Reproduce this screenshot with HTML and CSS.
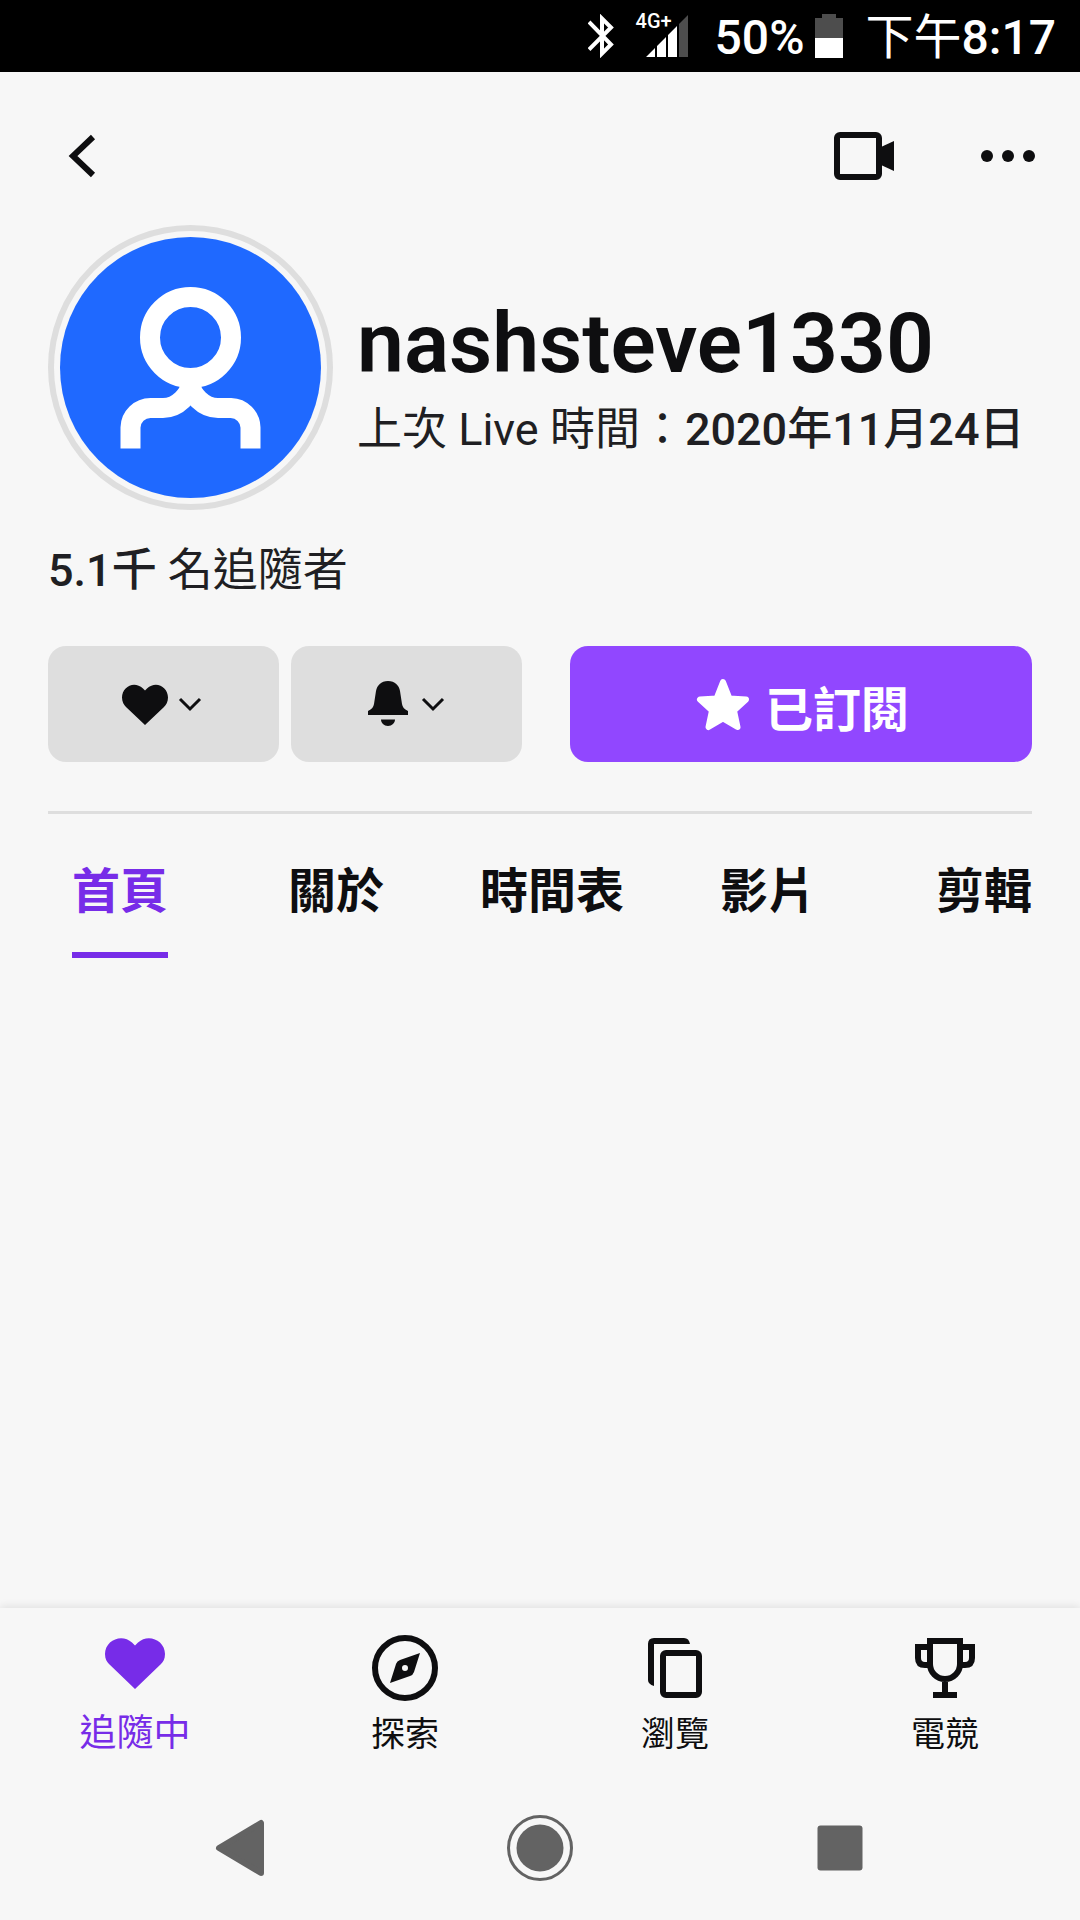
FILE: index.html
```html
<!DOCTYPE html>
<html lang="zh-Hant">
<head>
<meta charset="utf-8">
<meta name="viewport" content="width=device-width, initial-scale=1">
<title>nashsteve1330</title>
<link rel="stylesheet" href="styles.css">
</head>
<body>
<div class="screen">
  <div class="status">
    <svg class="status-bluetooth" width="26" height="44" viewBox="0 0 26 44" aria-hidden="true"><path d="M1 8 23 30.500 14 39.500V4.500L23 13.500 1 35.500" fill="none" stroke="#fff" stroke-width="4"/></svg>
    <div class="signal">
      <span class="signal-type">4G+</span>
      <svg width="42" height="42" viewBox="0 0 42 42" aria-hidden="true"><path d="M0 42 9 33V42ZM11 42V31L20 22V42ZM22 42V20L31 11V42Z" fill="#fff"/><path d="M33 42V9L42 0V42Z" fill="#4d4d4d"/></svg>
    </div>
    <div class="battery">
      <span class="status-text">50%</span>
      <svg width="28" height="44" viewBox="0 0 28 44" aria-hidden="true"><path d="M0 4H7V0H21V4H28V24H0Z" fill="#4d4d4d"/><path d="M0 24H28V44H0Z" fill="#fff"/></svg>
    </div>
    <time class="status-text"><span class="day-part">下午</span>8:17</time>
  </div>

  <header class="topbar">
    <button class="icon-button" aria-label="返回"><svg width="72" height="72" viewBox="0 0 72 72"><path d="M45 17 25 36 45 55" fill="none" stroke="currentColor" stroke-width="6"/></svg></button>
    <div class="topbar-actions">
      <button class="icon-button" aria-label="直播"><svg width="72" height="72" viewBox="0 0 72 72"><rect x="9" y="15" width="42" height="42" rx="3" fill="none" stroke="currentColor" stroke-width="6"/><path d="M53 27 66 21V51L53 45Z" fill="currentColor"/></svg></button>
      <button class="icon-button" aria-label="更多"><svg width="72" height="72" viewBox="0 0 72 72" fill="currentColor"><circle cx="15" cy="36" r="6"/><circle cx="36" cy="36" r="6"/><circle cx="57" cy="36" r="6"/></svg></button>
    </div>
  </header>

  <main class="channel">
    <section class="profile">
      <div class="avatar">
        <svg viewBox="0 0 261 261" aria-hidden="true"><circle cx="130.500" cy="130.500" r="130.500" fill="#1f69ff"/><g fill="none" stroke="#fff" stroke-width="20"><circle cx="130.500" cy="100.500" r="40.500"/><path d="M70.500 211.500V190.500A20 20 0 0 1 90.500 171H103C118 171 130.500 157 130.500 146C130.500 157 143 171 158 171H171A20 20 0 0 1 190.500 190.500V211.500"/></g></svg>
      </div>
      <div class="profile-text">
        <h1 class="name">nashsteve1330</h1>
        <p class="last-live">上次 Live 時間：<strong>2020年11月24日</strong></p>
      </div>
    </section>
    <p class="followers"><strong>5.1千</strong> 名追隨者</p>

    <div class="actions">
      <button class="action" aria-label="追隨">
        <svg width="48" height="48" viewBox="0 0 48 48"><path d="M24 10.500 22 8.500C13 0 1 7 1 17.500C1 22 3 25 5 27L24 45 43 27C45 25 47 22 47 17.500C47 7 35 0 26 8.500Z" fill="currentColor"/></svg>
        <svg width="32" height="32" viewBox="0 0 32 32"><path d="M6 11 16 21 26 11" fill="none" stroke="currentColor" stroke-width="3"/></svg>
      </button>
      <button class="action" aria-label="通知">
        <svg width="48" height="48" viewBox="0 0 48 48" fill="currentColor"><path d="M24 1C17 1 13 5.500 12 11L10 24C9.500 27 8 29 4 31V35H44V31C40 29 38.500 27 38 24L36 11C35 5.500 31 1 24 1ZM17 39.500H31C31 43 28 46 24 46S17 43 17 39.500Z"/></svg>
        <svg width="32" height="32" viewBox="0 0 32 32"><path d="M6 11 16 21 26 11" fill="none" stroke="currentColor" stroke-width="3"/></svg>
      </button>
      <button class="action action-subscribe">
        <svg width="60" height="60" viewBox="0 0 60 60" aria-hidden="true"><path d="M30 8 36.500 24.500 53 25.500 41 36.500 44.500 53 30 44.500 15.500 53 19 36.500 7 25.500 23.500 24.500Z" fill="#fff" stroke="#fff" stroke-width="6" stroke-linejoin="round"/></svg>
        <span class="action-label">已訂閱</span>
      </button>
    </div>

    <nav class="tabs" aria-label="頻道">
      <div class="tab-row">
        <a class="tab tab-current" href="#home" aria-current="page">首頁</a>
        <a class="tab" href="#about">關於</a>
        <a class="tab" href="#schedule">時間表</a>
        <a class="tab" href="#videos">影片</a>
        <a class="tab" href="#clips">剪輯</a>
      </div>
    </nav>
  </main>

  <nav class="bottom" aria-label="主選單">
    <a class="bottom-item bottom-current" href="#following" aria-current="page">
      <svg width="72" height="72" viewBox="0 0 72 72"><path d="M36 13.500 33 10.500C23 1 6 8 6 22C6 27 8 30 10 32L36 57 62 32C64 30 66 27 66 22C66 8 49 1 39 10.500Z" fill="currentColor"/></svg>
      <span>追隨中</span>
    </a>
    <a class="bottom-item" href="#discover">
      <svg width="72" height="72" viewBox="0 0 72 72"><circle cx="36" cy="36" r="30" fill="none" stroke="currentColor" stroke-width="6"/><path fill-rule="evenodd" d="M51 21 45 40Q44 43 41 44L21 51 27 32Q28 29 31 28ZM36 33A3 3 0 1 0 36 39A3 3 0 1 0 36 33Z" fill="currentColor"/></svg>
      <span>探索</span>
    </a>
    <a class="bottom-item" href="#browse">
      <svg width="72" height="72" viewBox="0 0 72 72"><path d="M15 54Q9 52 9 48V12Q9 6 15 6H45Q50 6 51 12H15Z" fill="currentColor"/><rect x="24" y="21" width="36" height="42" rx="3" fill="none" stroke="currentColor" stroke-width="6"/></svg>
      <span>瀏覽</span>
    </a>
    <a class="bottom-item" href="#esports">
      <svg width="72" height="72" viewBox="0 0 72 72"><path d="M21 9H51V32A15 15 0 0 1 21 32ZM21 15H9V26Q9 33 16 33H21M51 15H63V26Q63 33 56 33H51M36 47V63M24 63H48" fill="none" stroke="currentColor" stroke-width="6"/></svg>
      <span>電競</span>
    </a>
  </nav>

  <div class="system-nav">
    <button class="system-button" aria-label="上一頁"><svg width="72" height="72" viewBox="0 0 72 72"><path d="M57 11V61L15 36Z" fill="currentColor" stroke="currentColor" stroke-width="6" stroke-linejoin="round"/></svg></button>
    <button class="system-button" aria-label="主畫面"><svg width="72" height="72" viewBox="0 0 72 72"><circle cx="36" cy="36" r="31.500" fill="none" stroke="currentColor" stroke-width="3"/><circle cx="36" cy="36" r="23.500" fill="currentColor"/></svg></button>
    <button class="system-button" aria-label="最近使用"><svg width="72" height="72" viewBox="0 0 72 72"><rect x="13.500" y="13.500" width="45" height="45" rx="3" fill="currentColor"/></svg></button>
  </div>
</div>
</body>
</html>
```

FILE: styles.css
```css
:root {
  --bg: #f7f7f7;
  --ink: #0e0e10;
  --ink-soft: #1f1f23;
  --line: #dedede;
  --purple: #772ce8;
  --latin: Roboto, "Noto Sans CJK TC", sans-serif;
}

* {
  box-sizing: border-box;
}

body {
  margin: 0;
  background: var(--bg);
  color: var(--ink);
  font-family: var(--latin);
}

h1,
p {
  margin: 0;
}

button {
  padding: 0;
  border: 0;
  background: none;
  color: inherit;
  font: inherit;
}

a {
  color: inherit;
  text-decoration: none;
}

svg {
  display: block;
  flex: none;
}

.screen {
  display: flex;
  flex-direction: column;
  min-height: 100vh;
  overflow: hidden;
}

/* Status bar */
.status {
  display: flex;
  align-items: center;
  justify-content: flex-end;
  gap: 22px;
  height: 72px;
  padding-right: 24px;
  background: #000;
  color: #fff;
  font-size: 48px;
  font-weight: 500;
  line-height: 72px;
}

.status-text {
  padding-top: 4px;
}

.day-part {
  font-weight: 400;
}

.signal {
  position: relative;
  padding-left: 10px;
  margin-right: 5px;
}

.signal-type {
  position: absolute;
  left: 0;
  top: -6px;
  font-size: 20px;
  line-height: 24px;
}

.battery {
  display: flex;
  align-items: center;
  gap: 11px;
}

/* Header */
.topbar {
  display: flex;
  justify-content: space-between;
  padding: 48px 36px 0 48px;
}

.topbar-actions {
  display: flex;
  gap: 72px;
}

/* Channel */
.channel {
  flex: 1;
  padding: 33px 48px 0;
}

.profile {
  display: flex;
  align-items: center;
  gap: 24px;
}

.avatar {
  flex: none;
  width: 285px;
  padding: 6px;
  border: 6px solid var(--line);
  border-radius: 50%;
}

.profile-text {
  padding-top: 29px;
  white-space: nowrap;
}

.name {
  font-size: 84px;
  font-weight: 600;
  line-height: 96px;
}

.last-live {
  color: var(--ink-soft);
  font-size: 45px;
  line-height: 76px;
}

.last-live strong,
.followers strong {
  font-weight: 500;
}

.followers {
  margin-top: 31px;
  color: var(--ink-soft);
  font-size: 45px;
  line-height: 60px;
}

.actions {
  display: flex;
  gap: 12px;
  margin-top: 45px;
}

.action {
  display: flex;
  flex: 1 1 0;
  align-items: center;
  justify-content: center;
  gap: 5px;
  height: 116px;
  border-radius: 18px;
  background: var(--line);
}

.action-subscribe {
  flex-grow: 2;
  gap: 12px;
  margin-left: 36px;
  background: #9147ff;
  color: #fff;
  font-size: 48px;
  font-weight: 700;
}

.action-label {
  padding-top: 4px;
}

.tabs {
  margin-top: 49px;
  border-top: 3px solid var(--line);
}

/* The row of tabs runs past the right edge of the screen. */
.tab-row {
  display: grid;
  grid-template-columns: repeat(5, 1fr);
  justify-items: center;
  margin: 0 -60px 0 -36px;
}

.tab {
  padding: 37px 0 29px;
  border-bottom: 6px solid transparent;
  font-family: "Noto Sans CJK TC", sans-serif;
  font-size: 48px;
  font-weight: 700;
  line-height: 72px;
}

.tab-current {
  border-color: var(--purple);
  color: var(--purple);
}

/* App navigation */
.bottom {
  display: grid;
  grid-template-columns: repeat(4, 1fr);
  height: 168px;
  padding-top: 24px;
  box-shadow: 0 -2px 8px rgba(0, 0, 0, 0.09);
  background: var(--bg);
}

.bottom-item {
  display: flex;
  flex-direction: column;
  align-items: center;
  font-family: "Noto Sans CJK TC", sans-serif;
  font-size: 34px;
  line-height: 56px;
}

.bottom-current {
  color: var(--purple);
  font-size: 37px;
  line-height: 52px;
}

/* System navigation */
.system-nav {
  display: grid;
  grid-template-columns: repeat(3, 1fr);
  place-items: center;
  height: 144px;
  padding: 0 90px;
  background: var(--bg);
  color: #636363;
}
```
